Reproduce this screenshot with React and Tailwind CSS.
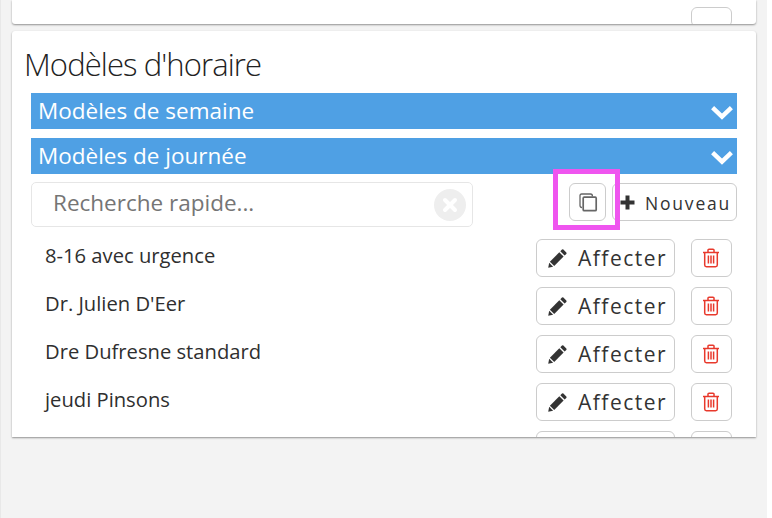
import React from "react";

function Chevron() {
  return (
    <svg width="22" height="15" viewBox="0 0 22 15" className="shrink-0 mt-[5px]" fill="none">
      <path d="M3.2 3.2 L11 10.6 L18.8 3.2" stroke="white" strokeWidth="4.4" strokeLinecap="square" />
    </svg>
  );
}

function Pencil() {
  return (
    <svg width="19" height="19" viewBox="0 0 19 19" className="shrink-0">
      <path d="M14 .6 Q14.7 0 15.4 .6 L18.3 3.5 Q18.9 4.2 18.3 4.9 L16.6 6.6 L12.3 2.3 Z" fill="#333" />
      <path d="M11.3 3.3 L15.6 7.6 L6.2 17 L1.9 12.7 Z" fill="#333" />
      <path d="M1.2 13.8 L5.1 17.7 L.2 18.8 Z" fill="#333" />
    </svg>
  );
}

function Trash() {
  return (
    <svg width="18" height="20" viewBox="0 0 18 20" fill="none" stroke="#e8392c" strokeWidth="1.5" className="shrink-0">
      <path d="M1 4.5 H17" />
      <path d="M6 4.2 V2 Q6 1.2 7 1.2 H11 Q12 1.2 12 2 V4.2" />
      <path d="M2.7 4.7 V17 Q2.7 18.7 4.4 18.7 H13.6 Q15.3 18.7 15.3 17 V4.7" />
      <path d="M6.4 7.5 V15.5 M9 7.5 V15.5 M11.6 7.5 V15.5" />
    </svg>
  );
}

function Row({ name }) {
  return (
    <div className="h-[48px] flex items-start shrink-0">
      <span className="pl-[14px] pt-[2px] text-[20.2px] leading-[28px] text-[#2f2f2f] flex-1">{name}</span>
      <button className="h-[38px] w-[139px] border border-[#cccccc] rounded-[6px] bg-white flex items-center pl-[11px] gap-[11px]">
        <Pencil />
        <span className="text-[21px] leading-[36px] tracking-[1.5px] text-[#333]">Affecter</span>
      </button>
      <button className="ml-[16px] mr-[5px] h-[38px] w-[41px] border border-[#cccccc] rounded-[6px] bg-white flex items-center justify-center pr-[2px]">
        <Trash />
      </button>
    </div>
  );
}

function EmptyRow() {
  return (
    <div className="h-[48px] flex justify-end items-start shrink-0">
      <div className="h-[38px] w-[139px] border border-[#cccccc] rounded-[6px] bg-white" />
      <div className="ml-[16px] mr-[5px] h-[38px] w-[41px] border border-[#cccccc] rounded-[6px] bg-white" />
    </div>
  );
}

function Bar({ label }) {
  return (
    <div className="h-[36px] bg-[#4fa0e4] flex items-center justify-between pl-[7px] pr-[4px] mb-[9px] shrink-0">
      <span className="text-white text-[22.5px] leading-[34px]">{label}</span>
      <Chevron />
    </div>
  );
}

export default function App() {
  return (
    <div className="w-[772px] h-[518px] bg-white overflow-hidden" style={{ fontFamily: '"Open Sans", sans-serif' }}>
      <div className="w-[767px] h-[518px] bg-[#f3f3f3] border-l border-[#e8e8e8] pl-[11px] pr-[11px]">
        <div className="h-[24px] bg-white rounded-b-[3px] shadow-[0_1px_2px_rgba(0,0,0,0.4)] flex justify-end pr-[24px] pt-[7px] overflow-hidden">
          <div className="w-[41px] h-[20px] border border-[#cccccc] rounded-[6px] shrink-0" />
        </div>
        <div className="mt-[7px] h-[406px] bg-white rounded-t-[3px] shadow-[0_1px_2px_rgba(0,0,0,0.4)] pl-[19px] pr-[19px] flex flex-col overflow-hidden relative">
          <h1 className="-ml-[7px] mt-[13px] h-[49px] text-[31px] leading-[40px] font-light tracking-[-0.9px] text-[#222] shrink-0">Modèles d'horaire</h1>
          <Bar label="Modèles de semaine" />
          <Bar label="Modèles de journée" />
          <div className="flex items-start -mt-[1px] h-[57px] shrink-0">
            <div className="w-[442px] h-[45px] border border-[#e6e6e6] rounded-[5px] flex items-center pl-[21px] pr-[6px] justify-between">
              <span className="text-[22.5px] leading-[30px] pb-[3px] text-[#757575]">Recherche rapide...</span>
              <span className="w-[32px] h-[32px] rounded-full bg-[#eeeeee] flex items-center justify-center">
                <svg width="16" height="16" viewBox="0 0 16 16"><path d="M3 3 L13 13 M13 3 L3 13" stroke="white" strokeWidth="4" strokeLinecap="round" /></svg>
              </span>
            </div>
            <button className="ml-auto mt-[1px] w-[37px] h-[38px] border border-[#cccccc] rounded-[6px] bg-white flex items-center justify-center">
              <svg width="20" height="20" viewBox="0 0 20 20" fill="none" stroke="#666" strokeWidth="1.3">
                <path d="M4 15.5 Q2 15.5 2 13.5 V3.6 Q2 2 3.6 2 H12.5 Q14.5 2 14.5 4.5" />
                <rect x="5.2" y="5.2" width="13" height="13.5" rx="1" strokeWidth="1.7" />
              </svg>
            </button>
            <button className="ml-[6px] mt-[1px] w-[125px] h-[38px] border border-[#cccccc] rounded-[6px] bg-white flex items-center pl-[7px] gap-[10px]">
              <svg width="15" height="15" viewBox="0 0 15 15" className="shrink-0"><path d="M5.5 .5 H9.5 V5.5 H14.5 V9.5 H9.5 V14.5 H5.5 V9.5 H.5 V5.5 H5.5 Z" fill="#333" /></svg>
              <span className="text-[17.5px] leading-[24px] pt-[1px] tracking-[1.8px] text-[#333]">Nouveau</span>
            </button>
            <div className="absolute left-[541px] top-[138px] w-[67px] h-[61px] border-[5px] border-[#ef55ef] pointer-events-none" />
          </div>
          <Row name="8-16 avec urgence" />
          <Row name="Dr. Julien D'Eer" />
          <Row name="Dre Dufresne standard" />
          <Row name="jeudi Pinsons" />
          <EmptyRow />
        </div>
      </div>
    </div>
  );
}
